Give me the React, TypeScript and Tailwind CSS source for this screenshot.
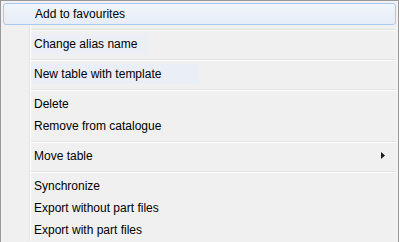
const font = { fontFamily: '"Liberation Sans", "Noto Sans", sans-serif' }

type Entry =
  | { kind: 'item'; label: string; active?: boolean; sub?: boolean; ghost?: string }
  | { kind: 'sep' }

const entries: Entry[] = [
  { kind: 'item', label: 'Add to favourites', active: true },
  { kind: 'sep' },
  { kind: 'item', label: 'Change alias name', ghost: 'w-[118px] bg-[#ecf0f6]' },
  { kind: 'sep' },
  { kind: 'item', label: 'New table with template', ghost: 'w-[168px] bg-[#e9eef7]' },
  { kind: 'sep' },
  { kind: 'item', label: 'Delete' },
  { kind: 'item', label: 'Remove from catalogue' },
  { kind: 'sep' },
  { kind: 'item', label: 'Move table', sub: true },
  { kind: 'sep' },
  { kind: 'item', label: 'Synchronize' },
  { kind: 'item', label: 'Export without part files' },
  { kind: 'item', label: 'Export with part files' },
]

const Gutter = () => (
  <div className="flex h-full shrink-0">
    <div className="w-[27px] border-r border-[#e2e3e3]" />
    <div className="w-px bg-white" />
  </div>
)

function MenuItem({ label, active, sub, ghost }: { label: string; active?: boolean; sub?: boolean; ghost?: string }) {
  if (active) {
    return (
      <div className="flex h-[22px] items-center rounded-[3px] border border-[#a8caf0] bg-gradient-to-b from-[#f1f5fb] to-[#e6edf8] pl-[31px] text-[12px] text-black">
        {label}
      </div>
    )
  }
  return (
    <div className="flex h-[22px] items-stretch">
      <Gutter />
      <div className="relative flex flex-1 items-center pl-[3px] text-[12px] text-black">
        {ghost && <div className={'absolute left-0 top-px bottom-px ' + ghost} />}
        <span className="relative">{label}</span>
        {sub && (
          <svg className="absolute right-[11px] top-[7px]" width="4" height="7" viewBox="0 0 4 7">
            <path d="M0 0 L4 3.5 L0 7 Z" fill="#1a1a1a" />
          </svg>
        )}
      </div>
    </div>
  )
}

const Separator = () => (
  <div className="flex h-[8px] items-stretch">
    <Gutter />
    <div className="flex flex-1 flex-col pt-[4px]">
      <div className="h-px bg-[#e2e3e3]" />
      <div className="h-px bg-white" />
    </div>
  </div>
)

export default function App() {
  return (
    <div className="h-[242px] w-[399px] overflow-hidden bg-white" style={font}>
      <div className="h-[260px] border border-[#979797] bg-[#f0f0f0]">
        <div className="h-full border border-[#f5f5f5] p-px">
          {entries.map((e, i) =>
            e.kind === 'sep' ? <Separator key={i} /> : <MenuItem key={i} {...e} />
          )}
        </div>
      </div>
    </div>
  )
}
